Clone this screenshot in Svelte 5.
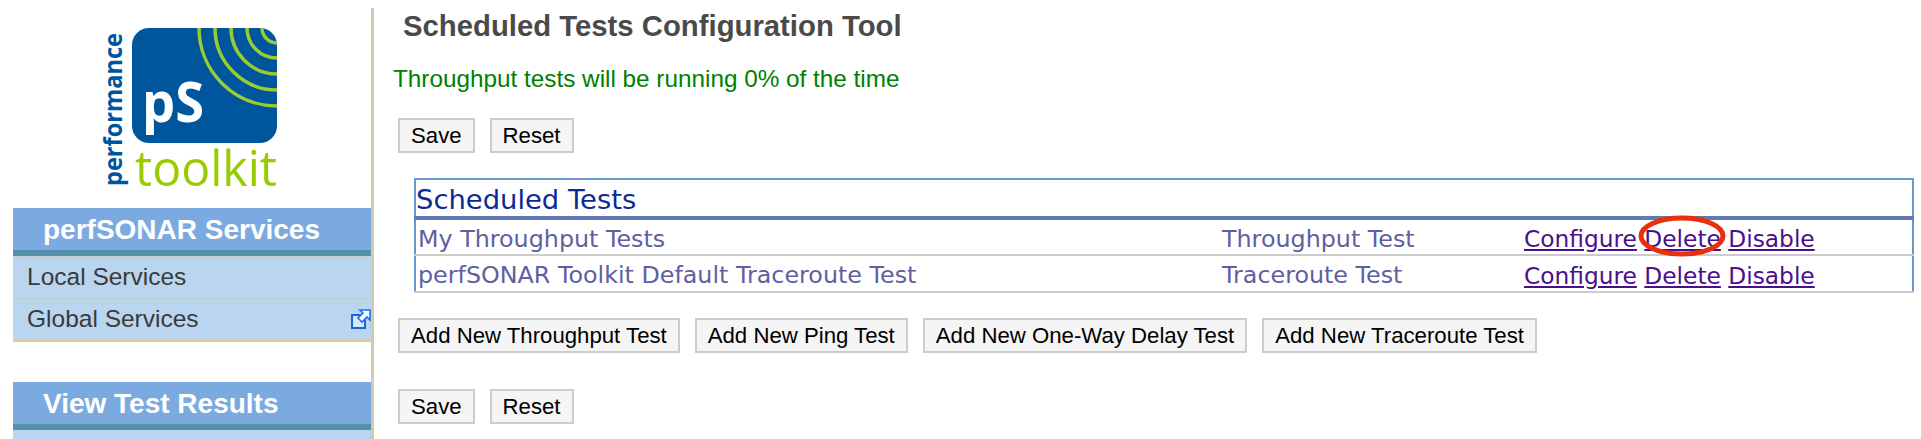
<script>
    const sections = [
        { title: 'perfSONAR Services', items: ['Local Services', 'Global Services'] },
        { title: 'View Test Results', items: [] }
    ];
    const tests = [
        { name: 'My Throughput Tests', type: 'Throughput Test', circled: true },
        { name: 'perfSONAR Toolkit Default Traceroute Test', type: 'Traceroute Test', circled: false }
    ];
    const addButtons = ['Add New Throughput Test', 'Add New Ping Test', 'Add New One-Way Delay Test', 'Add New Traceroute Test'];
</script>

<div class="page">
    <aside class="sidebar">
        <svg class="logo" width="358" height="200" viewBox="13 0 358 200">
            <defs>
                <clipPath id="logo-clip"><rect x="132" y="28" width="145" height="115" rx="17" /></clipPath>
            </defs>
            <rect x="132" y="28" width="145" height="115" rx="17" fill="#00569c" />
            <g clip-path="url(#logo-clip)" fill="none" stroke="#99cc33" stroke-width="3.5">
                <circle cx="277" cy="28" r="15" />
                <circle cx="277" cy="28" r="30" />
                <circle cx="277" cy="28" r="46" />
                <circle cx="277" cy="28" r="62" />
                <circle cx="277" cy="28" r="78" />
            </g>
            <text x="142" y="122" class="logo-ps" textLength="62" lengthAdjust="spacingAndGlyphs">pS</text>
            <text x="135" y="186" class="logo-toolkit" textLength="142" lengthAdjust="spacingAndGlyphs">toolkit</text>
            <text transform="translate(122 186) rotate(-90)" class="logo-perf" textLength="153" lengthAdjust="spacingAndGlyphs">performance</text>
        </svg>

        {#each sections as section}
            <section class="nav">
                <h2>{section.title}</h2>
                <ul>
                    {#each section.items as item, i}
                        <li>
                            {item}
                            {#if i === 1}
                                <svg class="ext" width="20" height="20" viewBox="0 0 20 20">
                                    <rect x="1" y="6" width="13" height="13" fill="#d8e8fb" stroke="#1a66d8" stroke-width="2" />
                                    <path d="M9 1h10v10l-3-3-5 5-4-4 5-5z" fill="#fff" stroke="#1a72f0" stroke-width="1.6" />
                                </svg>
                            {/if}
                        </li>
                    {/each}
                </ul>
            </section>
        {/each}
    </aside>

    <main class="content">
        <h1>Scheduled Tests Configuration Tool</h1>
        <p class="notice">Throughput tests will be running 0% of the time</p>

        <div class="buttons">
            <button>Save</button>
            <button>Reset</button>
        </div>

        <table>
            <colgroup>
                <col class="col-name" />
                <col class="col-type" />
                <col />
            </colgroup>
            <thead>
                <tr><th colspan="3">Scheduled Tests</th></tr>
            </thead>
            <tbody>
                {#each tests as test}
                    <tr>
                        <td class="name">{test.name}</td>
                        <td>{test.type}</td>
                        <td class="actions">
                            <a href="#c">Configure</a>
                            <span class="del">
                                <a href="#d">Delete</a>
                                {#if test.circled}
                                    <svg class="circle" width="96" height="46" viewBox="0 0 96 46">
                                        <ellipse cx="48" cy="23" rx="41" ry="18" fill="none" stroke="#e8300c" stroke-width="5" />
                                    </svg>
                                {/if}
                            </span>
                            <a href="#x">Disable</a>
                        </td>
                    </tr>
                {/each}
            </tbody>
        </table>

        <div class="buttons add">
            {#each addButtons as label}
                <button>{label}</button>
            {/each}
        </div>

        <div class="buttons last">
            <button>Save</button>
            <button>Reset</button>
        </div>
    </main>
</div>

<style>
    :global(body) {
        margin: 0;
        background: #fff;
    }

    .page {
        display: flex;
        height: 439px;
        overflow: hidden;
        font-family: "Liberation Sans", Arial, sans-serif;
    }

    .sidebar {
        width: 358px;
        margin-left: 13px;
        margin-top: 8px;
        border-right: 3px solid #d3cbae;
        flex: none;
    }

    .logo {
        display: block;
        margin-top: -8px;
        margin-bottom: 8px;
    }

    .logo-ps {
        font: 700 56px "Open Sans", sans-serif;
        fill: #fff;
    }

    .logo-toolkit {
        font: 400 50px "Open Sans", sans-serif;
        fill: #99cc00;
    }

    .logo-perf {
        font: 700 25px "Open Sans", sans-serif;
        fill: #00569c;
    }

    .nav {
        margin-bottom: 40px;
    }

    .nav h2 {
        margin: 0;
        height: 42px;
        line-height: 43px;
        padding-left: 30px;
        font-size: 28px;
        font-weight: 700;
        color: #fff;
        background: #7aaae0;
        border-bottom: 6px solid #5590aa;
    }

    .nav ul {
        margin: 0;
        padding: 0;
        list-style: none;
        background: #b9d5f0;
        min-height: 10px;
    }

    .nav li {
        position: relative;
        height: 40px;
        line-height: 38px;
        padding-left: 14px;
        font-size: 24.5px;
        color: #3a3a3a;
        border-top: 2px solid #c8cdd0;
    }

    .nav li:last-child {
        border-bottom: 2px solid #dccb96;
    }

    .ext {
        position: absolute;
        right: 0;
        top: 9px;
    }

    .content {
        flex: 1;
        padding-left: 19px;
        min-width: 0;
    }

    h1 {
        margin: 11px 0 0 10px;
        font-size: 29.3px;
        line-height: 30px;
        font-weight: 700;
        color: #4a4a4a;
    }

    .notice {
        margin: 25px 0 0;
        font-size: 24.3px;
        line-height: 26px;
        color: #008000;
    }

    .buttons {
        display: flex;
        gap: 15px;
        margin-left: 5px;
    }

    button {
        height: 35px;
        padding: 0 11px;
        font: 22.2px "Liberation Sans", Arial, sans-serif;
        color: #000;
        background: #f5f5f5;
        border: 2px solid #ccc;
        border-radius: 0;
    }

    .notice + .buttons {
        margin-top: 26px;
    }

    table {
        width: 1500px;
        margin: 25px 0 0 21px;
        border-collapse: collapse;
        table-layout: fixed;
        font-family: "DejaVu Sans", sans-serif;
    }

    .col-name {
        width: 807px;
    }

    .col-type {
        width: 302px;
    }

    th {
        height: 33px;
        padding: 3px 0 0;
        text-align: left;
        font-size: 27.4px;
        font-weight: 400;
        color: #0a2a96;
        border: 2px solid #6699cc;
        border-bottom: 4px solid #6478b4;
    }

    td {
        height: 37px;
        padding: 3px 0 0;
        box-sizing: border-box;
        font-size: 23.8px;
        color: #6060a0;
        border-bottom: 2px solid #ccc;
    }

    .name {
        padding-left: 2px;
        border-left: 2px solid #6699cc;
    }

    .actions {
        font-size: 23.3px;
        border-right: 2px solid #6699cc;
    }

    a {
        color: #4b0f8c;
    }

    .del {
        position: relative;
    }

    .circle {
        position: absolute;
        left: -10px;
        top: -12px;
    }

    .add {
        margin-top: 25px;
    }

    .last {
        margin-top: 36px;
    }
</style>
